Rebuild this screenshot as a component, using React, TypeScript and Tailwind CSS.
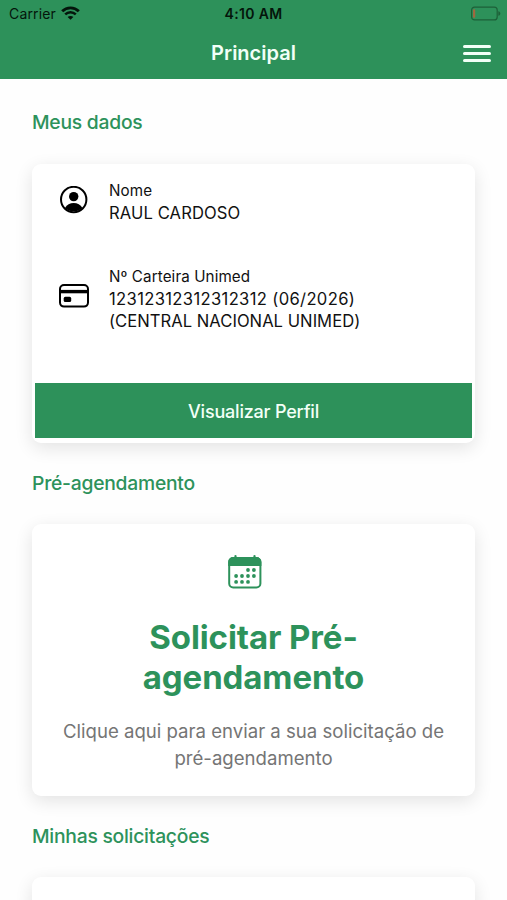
import type { ReactNode } from 'react';

function WifiIcon() {
  return (
    <svg className="-mt-[2px] h-[14px] w-[19px]" viewBox="0 0 19 14" fill="none" stroke="#04150b">
      <path d="M1.2 5.2C5.8.7 13.2.7 17.8 5.2" strokeWidth="2.9" />
      <path d="M4.2 8.4c3-2.9 7.6-2.9 10.6 0" strokeWidth="2.5" />
      <path d="M9.5 13.8 6.6 11c1.5-1.5 4.3-1.5 5.8 0Z" fill="#04150b" stroke="none" />
    </svg>
  );
}

function BatteryIcon() {
  return (
    <svg className="-mt-px h-[15px] w-[31px]" viewBox="0 0 31 15" fill="none">
      <rect x="1.6" y="1.1" width="25.6" height="12.8" rx="3" stroke="#1d6038" strokeWidth="1.2" />
      <rect x="3" y="3.3" width="2.2" height="8.4" rx="0.8" fill="#a0683f" />
      <path d="M28.3 5.2c2.7.6 2.7 4 0 4.6Z" fill="#1d6038" />
    </svg>
  );
}

function PersonIcon() {
  return (
    <svg className="h-7 w-7" viewBox="0 0 28 28" fill="none">
      <circle cx="13.7" cy="13.5" r="12.7" stroke="#000" strokeWidth="2" />
      <circle cx="13.7" cy="10.6" r="4.7" fill="#000" />
      <path d="M5 21.9c1.8-3.3 5-4.9 8.7-4.9s6.9 1.6 8.7 4.9a12.7 12.7 0 0 1-17.4 0Z" fill="#000" />
    </svg>
  );
}

function CardIcon() {
  return (
    <svg className="h-6 w-[30px]" viewBox="0 0 30 24" fill="none">
      <rect x="1" y="1" width="28" height="21.6" rx="4" stroke="#000" strokeWidth="2" />
      <path d="M1 5.9h28v3.4H1Z" fill="#000" />
      <rect x="4.7" y="12.8" width="7.5" height="5.2" rx="1.6" fill="#000" />
    </svg>
  );
}

const DAYS = [
  [20, 15], [25.9, 15],
  [8.1, 21], [14, 21], [20, 21], [25.9, 21],
  [8.1, 26.9], [14, 26.9], [20, 26.9],
];

function CalendarIcon() {
  return (
    <svg className="h-[34px] w-[34px]" viewBox="0 0 34 34" fill="none">
      <rect x="1.2" y="3.1" width="31.2" height="29.3" rx="4" stroke="#2d925b" strokeWidth="2" />
      <path d="M.2 11V7a5 5 0 0 1 5-5h23.2a5 5 0 0 1 5 5v4Z" fill="#2d925b" />
      <path d="M7.5 1.1V4M26.5 1.1V4" stroke="#2d925b" strokeWidth="2.2" strokeLinecap="round" />
      {DAYS.map(([x, y]) => (
        <circle key={`${x}-${y}`} cx={x} cy={y} r="1.9" fill="#2d925b" />
      ))}
    </svg>
  );
}

function SectionTitle({ children }: { children: ReactNode }) {
  return (
    <h2 className="flex h-[81px] shrink-0 items-center text-[19.3px] font-medium tracking-[-0.24px] text-[#2d925b]">{children}</h2>
  );
}

const CARD = 'shrink-0 rounded-[9px] bg-white shadow-[0_5px_18px_rgba(0,0,0,0.11)]';

export default function App() {
  return (
    <div className="flex h-[900px] w-full flex-col overflow-hidden bg-[#fefefe] font-['Inter','Liberation_Sans',sans-serif]">
      <header className="h-[79px] shrink-0 bg-[#2d915a]">
        <div className="grid h-[27px] grid-cols-3 items-center text-[#04150b]">
          <div className="flex items-center gap-[5px] pl-[9px] text-[14px]">
            <span className="tracking-[0.15px]">Carrier</span>
            <WifiIcon />
          </div>
          <div className="pb-px text-center text-[14px] font-semibold tracking-[0.35px]">4:10 AM</div>
          <div className="flex justify-end pr-[6px]">
            <BatteryIcon />
          </div>
        </div>
        <div className="grid h-[51px] grid-cols-3 items-center">
          <div />
          <h1 className="text-center text-[20px] font-semibold text-[#f2fff7]">Principal</h1>
          <div className="flex flex-col items-end gap-1 pt-px pr-4">
            <span className="h-[3px] w-7 rounded-full bg-[#f2fff7]" />
            <span className="h-[3px] w-7 rounded-full bg-[#f2fff7]" />
            <span className="h-[3px] w-7 rounded-full bg-[#f2fff7]" />
          </div>
        </div>
      </header>

      <main className="flex flex-col px-8 pt-[3px]">
        <SectionTitle>Meus dados</SectionTitle>
        <section className={`${CARD} mt-px flex h-[279px] flex-col px-[3px] pb-[5px]`}>
          <div className="flex items-start pt-[16px] pl-[25px]">
            <div className="flex h-[39px] w-[49px] items-center"><PersonIcon /></div>
            <div className="text-[16.6px] leading-[22px] text-[#111]">
              <p className="text-[15.2px] tracking-[0.1px]">Nome</p>
              <p className="tracking-[0.1px]">RAUL CARDOSO</p>
            </div>
          </div>
          <div className="flex items-start pt-[42px] pl-[24px]">
            <div className="w-[50px] pt-[18px]"><CardIcon /></div>
            <div className="text-[16.6px] leading-[22px] text-[#111]">
              <p className="text-[15.2px] tracking-[0.1px]">Nº Carteira Unimed</p>
              <p className="tracking-[0.34px]">12312312312312312 (06/2026)</p>
              <p className="tracking-[0.03px]">(CENTRAL NACIONAL UNIMED)</p>
            </div>
          </div>
          <button className="mt-auto h-[55px] bg-[#2d915a] pt-px text-[18px] font-medium tracking-[-0.2px] text-[#f2fff7]">Visualizar Perfil</button>
        </section>

        <SectionTitle>Pré-agendamento</SectionTitle>
        <section className={`${CARD} flex h-[272px] flex-col items-center pt-[31px] text-center`}>
          <div className="pr-[18px]"><CalendarIcon /></div>
          <h3 className="mt-[28px] w-[260px] text-[33px] leading-[40px] font-bold tracking-[-0.1px] text-[#2d925b]">Solicitar Pré-agendamento</h3>
          <p className="mt-[21px] text-[18.6px] leading-[27px] text-[#757575]">
            Clique aqui para enviar a sua solicitação de
            <br />
            pré-agendamento
          </p>
        </section>

        <SectionTitle>Minhas solicitações</SectionTitle>
        <section className={`${CARD} h-[100px]`} />
      </main>
    </div>
  );
}
